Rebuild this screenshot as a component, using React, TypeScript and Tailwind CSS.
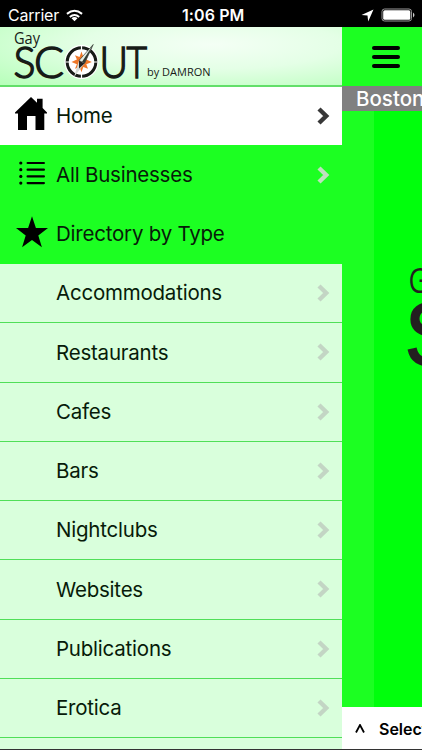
const directoryTypes = [
  "Accommodations",
  "Restaurants",
  "Cafes",
  "Bars",
  "Nightclubs",
  "Websites",
  "Publications",
  "Erotica",
];

function Chevron({ className }: { className: string }) {
  return (
    <svg viewBox="0 0 13 18" className={`h-[18px] w-[13px] ${className}`} fill="none" stroke="currentColor" strokeWidth="4.4">
      <path d="M2 2 9.2 9 2 16" />
    </svg>
  );
}

function HomeIcon() {
  return (
    <svg viewBox="0 0 32 34" className="-mt-1 h-[34px] w-8">
      <path d="M16 0 22 5.7V1.8h5.6v9.2L32 15.5v1H29.3V33H20.5V19H12v14H3V16.5H0v-1Z" />
    </svg>
  );
}

function ListIcon() {
  return (
    <svg viewBox="0 0 32 34" className="h-[34px] w-8">
      {[5, 11.7, 18.4, 25.1].map((y) => (
        <g key={y}>
          <circle cx="5.8" cy={y} r="1.6" />
          <rect x="11.5" y={y - 1.1} width="18.5" height="2.2" rx="1.1" />
        </g>
      ))}
    </svg>
  );
}

function StarIcon() {
  return (
    <svg viewBox="0 0 34 34" className="-mr-0.5 -mt-0.5 h-[34px] w-[34px]">
      <path d="m17 .3 3.9 11.8H33l-9.7 7.3 3.6 11.8-9.9-7.2-9.9 7.2 3.6-11.8L1 12.1h12.1Z" />
    </svg>
  );
}

function Logo() {
  return (
    <svg viewBox="0 0 342 58" className="h-[58px] w-[342px] font-['Lato',sans-serif]" fill="#171b17">
      <text x="14" y="17" fontSize="17" textLength="26" lengthAdjust="spacingAndGlyphs" className="font-['Open_Sans',sans-serif]">Gay</text>
      <g fontSize="43" className="font-light" stroke="#171b17" strokeWidth="1.5">
        <text x="13.5" y="50.5" textLength="22" lengthAdjust="spacingAndGlyphs">S</text>
        <text x="34" y="50.5" textLength="30" lengthAdjust="spacingAndGlyphs">C</text>
        <text x="99.5" y="50.5" textLength="28.5" lengthAdjust="spacingAndGlyphs">U</text>
        <text x="126.5" y="50.5" textLength="20.5" lengthAdjust="spacingAndGlyphs">T</text>
      </g>
      {/* compass */}
      <circle cx="81.5" cy="35" r="17" fill="#fff" />
      <circle cx="81.5" cy="35" r="14.3" fill="#fff" stroke="#171b17" strokeWidth="3" />
      <path d="M81.5 19v4M81.5 47v4M65.5 35h4M93.5 35h4" stroke="#fff" strokeWidth="1.2" />
      <path d="m81.5 24.5 1.8 5.5 4.7-1.8-1.7 4.3 5.5 2.5-5.5 2.3 1.7 4.5-4.7-1.9-1.8 5.4-2-5.4-4.5 1.9 1.9-4.5-5.4-2.3 5.4-2.5-1.9-4.3 4.5 1.8Z" fill="#ee7728" />
      <path d="M93.2 17.5 84.5 36.5 79 33.5Z" fill="#e4eee4" stroke="#171b17" strokeWidth=".6" />
      <path d="m93.2 17.5-8.7 19-2.6-1.6Z" fill="#343b34" />
      <path d="m79 33.5 5.5 3-10.5 13.5Z" fill="#d4d9d4" />
      <path d="m79 33.5 5.5 3-5.5 5Z" fill="#222" />
      <text x="147" y="49" fontSize="11.5" textLength="63.5" lengthAdjust="spacingAndGlyphs" className="font-['Open_Sans',sans-serif]">by DAMRON</text>
    </svg>
  );
}

function StatusBar() {
  return (
    <header className="relative flex h-[27px] shrink-0 items-center justify-between bg-black pt-[3px] pr-[7px] pl-2 text-white">
      <div className="flex items-center gap-[7px]">
        <span className="text-[16px] leading-5 tracking-[-0.2px]">Carrier</span>
        <svg viewBox="0 0 18 13" className="h-[13px] w-[17px]" fill="none" stroke="currentColor" strokeWidth="2.1">
          <path d="M1 4.8q8-6.5 16 0M4 8q5-4 10 0" />
          <path d="m5.8 9.4 3.2 3.2 3.2-3.2q-3.2-2.4-6.4 0Z" fill="currentColor" stroke="none" />
        </svg>
      </div>
      <span className="absolute left-[182px] text-[16px] leading-5 font-semibold tracking-[0.1px]">1:06 PM</span>
      <div className="flex items-center gap-[7px]">
        <svg viewBox="0 0 13 13" className="size-[13px]" fill="currentColor">
          <path d="M12.5.5 7.2 12.5 6.5 6.5.5 6.1Z" />
        </svg>
        <svg viewBox="0 0 34 14" className="h-3.5 w-[34px]">
          <rect x="1" y="1" width="29.5" height="12" rx="2.5" fill="none" stroke="#999" />
          <rect x="2.2" y="2.2" width="27.1" height="9.6" rx="1.5" fill="#fff" />
          <path d="M32 4.5q3 2.5 0 5Z" fill="#ccc" />
        </svg>
      </div>
    </header>
  );
}

function Menu() {
  return (
    <nav className="flex w-[342px] shrink-0 flex-col overflow-hidden bg-[#d9ffdc] tracking-[-0.22px]">
      <div className="h-[60px] shrink-0 border-b-2 border-[#62df69] bg-[radial-gradient(ellipse_at_62%_30%,#f4fff5_0%,#e4ffe6_43%,#b6ffb9_100%)] tracking-normal">
        <Logo />
      </div>
      <a className="flex h-[57.5px] shrink-0 items-center bg-white pr-[12px] pl-[15px]">
        <HomeIcon />
        <span className="ml-[9px] flex-1 pt-px">Home</span>
        <Chevron className="text-[#383838]" />
      </a>
      <a className="flex h-[60px] shrink-0 items-center bg-[#1cff22] pr-[12px] pl-[15px]">
        <ListIcon />
        <span className="ml-[9px] flex-1 pt-0.5">All Businesses</span>
        <Chevron className="text-[#bfdfbf]" />
      </a>
      <div className="flex h-[59.5px] shrink-0 items-center bg-[#1cff22] pl-[15px]">
        <StarIcon />
        <span className="ml-[9px]">Directory by Type</span>
      </div>
      {directoryTypes.map((type) => (
        <a key={type} className="flex h-[59.25px] shrink-0 items-center justify-between border-b-[1.5px] border-[#50df58] pr-[12px] pl-14">
          <span className="pt-px">{type}</span>
          <Chevron className="text-[#c3d5c4]" />
        </a>
      ))}
    </nav>
  );
}

function MapPage() {
  return (
    <main className="flex min-w-0 flex-1 flex-col overflow-hidden">
      <div className="flex h-[59px] shrink-0 items-center bg-[#1cff22] pt-px pl-[30px]">
        <div className="flex w-7 flex-col gap-[5px]">
          <span className="h-1 rounded-full bg-black" />
          <span className="h-1 rounded-full bg-black" />
          <span className="h-1 rounded-full bg-black" />
        </div>
      </div>
      <div className="flex h-[25px] shrink-0 items-center bg-[#808080] pt-0.5 pl-3.5 text-[20.5px] font-medium whitespace-nowrap text-white">
        Boston
      </div>
      <div className="flex flex-1 bg-[#00ff0c]">
        <div className="w-8 shrink-0 bg-[#1cff22]" />
        <svg viewBox="0 0 48 596" className="h-[596px] w-12 shrink-0" fill="#231f20">
          <text x="34.5" y="182" fontSize="34" textLength="20" lengthAdjust="spacingAndGlyphs" className="font-['Open_Sans',sans-serif]">G</text>
          <text x="31" y="254" fontSize="89" textLength="54" lengthAdjust="spacingAndGlyphs" stroke="#231f20" strokeWidth="2" className="font-['Liberation_Sans',sans-serif]">S</text>
        </svg>
      </div>
      <div className="flex h-[43px] shrink-0 items-center gap-3.5 bg-white pl-[13px] text-[16px] font-semibold whitespace-nowrap text-black">
        <svg viewBox="0 0 10 9" className="h-[9px] w-2.5 shrink-0" fill="none" stroke="currentColor" strokeWidth="1.8">
          <path d="M1 8.5 5 1l4 7.5" />
        </svg>
        <span>Select</span>
      </div>
    </main>
  );
}

export default function App() {
  return (
    <div className="flex h-[750px] w-[422px] flex-col overflow-hidden border-b border-[#333] bg-black font-['Inter',sans-serif] text-[20.5px] text-[#071b09]">
      <StatusBar />
      <div className="flex min-h-0 flex-1">
        <Menu />
        <MapPage />
      </div>
    </div>
  );
}
